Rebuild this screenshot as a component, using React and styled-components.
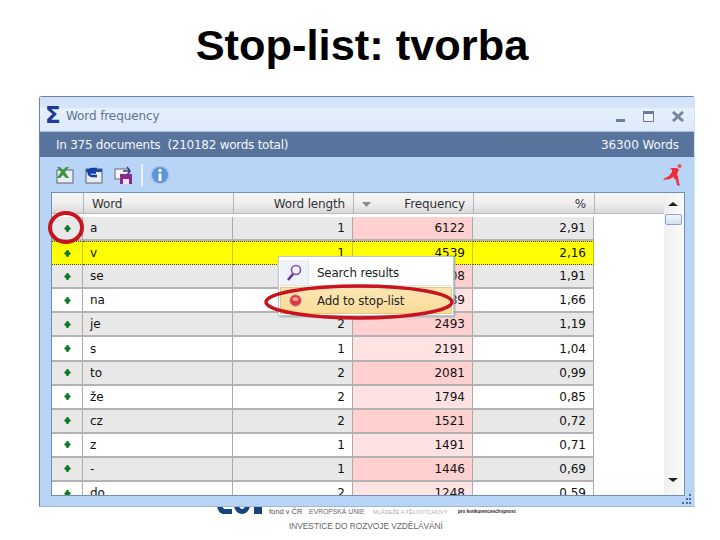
import React from "react";
import styled, { createGlobalStyle } from "styled-components";

const Global = createGlobalStyle`
  html, body { margin: 0; padding: 0; background: #fff; }
  body { width: 720px; height: 540px; overflow: hidden; font-family: "Liberation Sans", Arial, sans-serif; }
`;
const Page = styled.div`
  position: relative; width: 720px; height: 540px; overflow: hidden;
  display: flex; flex-direction: column; align-items: flex-start;
`;
const Heading = styled.h1`
  margin: 0; width: 724px; height: 96px; padding-top: 21px; box-sizing: border-box;
  text-align: center; font: 700 43.4px/48px "Liberation Sans", Arial, sans-serif; color: #000;
`;
const Win = styled.div`
  position: relative; z-index: 2; margin-left: 39px; width: 656px; height: 411px; box-sizing: border-box;
  background: #b8d4f6; border-left: 1px solid #6d83a0; border-top: 1px solid #6d83a0;
  border-radius: 3px 3px 0 0; display: flex; flex-direction: column;
  font-family: "DejaVu Sans", Tahoma, sans-serif; font-size: 11.5px;
  border-bottom: 1px solid #9db7d8; border-right: 1px solid #cfe0f5;
`;
const TitleBar = styled.div`
  height: 35px; display: flex; align-items: center; padding: 0 10px 0 5px; box-sizing: border-box;
  background: linear-gradient(#cfe0f6 0%, #d6e5f8 30%, #e6f0fc 35%, #dce9fa 100%);
  color: #5d7390; border-bottom: 1px solid #a9c3e3;
`;
const Sigma = styled.span`
  font: 700 23px/1 "DejaVu Sans", sans-serif; color: #1b3a9a; width: 21px; padding-top: 3px;
`;
const TitleText = styled.span`flex: 1; font-size: 12px; letter-spacing: -.1px; padding-top: 4px;`;
const WinButtons = styled.div`display: flex; align-items: center; padding-top: 4px;`;
const Strip = styled.div`
  height: 25px; background: #58749c; color: #f2f6fb; display: flex; justify-content: space-between;
  align-items: center; padding: 0 15px 0 16px; font-size: 12px; letter-spacing: -.26px; white-space: pre;
`;
const StripEnd = styled.span`letter-spacing: -.1px;`;
const Toolbar = styled.div`
  height: 35px; display: flex; align-items: center; padding: 0 10px 0 16px; gap: 11px;
`;
const Sep = styled.span`width: 2px; height: 22px; background: #e8f1fc; margin: 0 -4px 0 -2px;`;
const Runner = styled.span`margin-left: auto; height: 24px;`;
const GridWrap = styled.div`
  margin: 0 9px 0 11px; height: 304px; background: #fff; border: 1px solid #6f8fb6;
  display: flex; overflow: hidden; box-sizing: border-box;
`;
const Table = styled.div`flex: 1; min-width: 0;`;
const HeaderRow = styled.div`
  height: 21px; display: grid; grid-template-columns: 31px 150px 120px 120px 121px 71px;
  background: linear-gradient(#f6f6f6, #eeeeee 55%, #d8d8d8); border-bottom: 1px solid #bbb;
  color: #333; box-sizing: border-box;
`;
const HCell = styled.div`
  display: flex; align-items: center; justify-content: ${p => p.$align || "flex-start"};
  padding: 2px 8px 0; border-left: ${p => p.$nosep ? "none" : "1px solid #b4b4b4"}; box-sizing: border-box;
  font-size: 12px; letter-spacing: -.15px;
`;
const Gap = styled.div`height: 3px; background: #fff;`;
const Row = styled.div`
  height: 24.1px; display: grid; grid-template-columns: 31px 150px 120px 120px 121px;
  box-sizing: border-box; position: relative; color: #111; font-size: 12px;
`;
const Cell = styled.div`
  display: flex; align-items: center; box-sizing: border-box;
  justify-content: ${p => p.$right ? "flex-end" : p.$center ? "center" : "flex-start"};
  padding: 0 7px; border-right: 1px solid #aaa; border-bottom: 2px solid #b3b3b3;
  background: ${p => p.$bg};
  ${p => p.$sel ? "border-top: 1px dotted #444; border-bottom: 1px dotted #444; border-right-color:#c8c800;" : ""}
`;
const Scroll = styled.div`
  width: 20px; flex: none; background: linear-gradient(90deg, #f0f0f0, #fafafa); position: relative;
`;
const Thumb = styled.div`
  position: absolute; top: 21px; left: 1px; width: 17px; height: 11px; box-sizing: border-box;
  border: 1px solid #8fa6c4; border-radius: 2px; background: linear-gradient(#f0f5fb, #d3e1f3);
`;
const Arrow = styled.div`
  position: absolute; left: 4px; width: 0; height: 0;
  border-left: 5px solid transparent; border-right: 5px solid transparent;
  ${p => p.$up ? "top: 9px; border-bottom: 4px solid #222;" : "bottom: 13px; border-top: 4px solid #222;"}
`;
const Grip = styled.svg`position: absolute; right: 1px; bottom: 0;`;
const Menu = styled.div`
  position: absolute; z-index: 3; left: 278px; top: 256px; width: 176px; height: 60px; box-sizing: border-box;
  background: #fff; border: 1px solid #b9c6d8; box-shadow: 1px 1px 2px #9aa; padding: 2px 1px;
  font-family: "DejaVu Sans", Tahoma, sans-serif; font-size: 11.8px; color: #222; letter-spacing: -.12px;
`;
const MenuItem = styled.div`
  height: 27px; display: flex; align-items: center; box-sizing: border-box;
  ${p => p.$active ? "background: linear-gradient(#fde6b4, #fbdb98); border: 1px solid #e8c77c; margin-top: 1px;" : "border-bottom: 1px solid #e4e4e4; padding-top: 1px;"}
`;
const MenuIcon = styled.span`
  width: 28px; height: 100%; flex: none; display: flex; align-items: center; justify-content: center;
  margin-right: 8px;
  ${p => p.$active ? "" : "border-right: 1px solid #dbe3ee; background: #eef3f9;"}
`;
const Overlay = styled.svg`position: absolute; z-index: 4; left: 0; top: 0; pointer-events: none;`;
const Footer = styled.div`
  position: relative; z-index: 1; margin-top: -1px; margin-left: 217px; width: 310px; height: 34px;
  color: #555; font-family: "Liberation Sans", Arial, sans-serif;
  display: flex; flex-direction: column;
`;
const FootTop = styled.div`display: flex; align-items: flex-end; height: 10px; font-size: 7.5px; white-space: nowrap;`;
const Logo = styled.svg`align-self: flex-start; flex: none;`;
const FondText = styled.span`margin-left: 6px; width: 40px; line-height: 8px;`;
const UnionText = styled.span`width: 64px; line-height: 8px; color: #667; font-size: 6.8px;`;
const Faint = styled.span`color: #b0b0b0; font-size: 5.6px; width: 85px; line-height: 8px;`;
const Tiny = styled.span`color: #222; font-size: 4.6px; font-weight: 700; line-height: 8px;`;
const FootLine = styled.div`margin: 5px 0 0 72px; font-size: 8.4px; color: #666; white-space: nowrap; letter-spacing: -.05px;`;

const data = [["a",1,6122,"2,91"],["v",1,4539,"2,16"],["se",2,4008,"1,91"],["na",2,3489,"1,66"],["je",2,2493,"1,19"],["s",1,2191,"1,04"],["to",2,2081,"0,99"],["že",2,1794,"0,85"],["cz",2,1521,"0,72"],["z",1,1491,"0,71"],["-",1,1446,"0,69"],["do",2,1248,"0,59"]];

const Dot = () => (
  <svg width="9" height="9" viewBox="0 0 9 9"><path d="M4.5 1 8 4.5 4.5 8 1 4.5Z" fill="#157a25" /><rect x="3.5" y="1" width="2" height="7" fill="#157a25" /></svg>
);

const Grow = ({ i }) => {
  const sel = i === 1;
  const odd = i % 2 === 0;
  const base = sel ? "#ffff00" : odd ? "#e8e8e8" : "#ffffff";
  const pink = sel ? "#ffff00" : odd ? "#ffd0d0" : "#ffe2e2";
  const d = data[i];
  return (
    <Row>
      <Cell $center $sel={sel} $bg={base}><Dot /></Cell>
      <Cell $sel={sel} $bg={base}>{d[0]}</Cell>
      <Cell $right $sel={sel} $bg={base}>{d[1]}</Cell>
      <Cell $right $sel={sel} $bg={pink}>{d[2]}</Cell>
      <Cell $right $sel={sel} $bg={base}>{d[3]}</Cell>
    </Row>
  );
};

export default function App() {
  return (
    <Page>
      <Global />
      <Heading>Stop-list: tvorba</Heading>
      <Win>
        <TitleBar>
          <Sigma>Σ</Sigma>
          <TitleText>Word frequency</TitleText>
          <WinButtons>
            <svg width="27" height="11" viewBox="0 0 27 11"><rect x="0" y="8" width="9" height="3" fill="#6b7f98" /></svg>
            <svg width="29" height="11" viewBox="0 0 29 11"><rect x=".5" y=".5" width="10" height="10" fill="#eef4fb" stroke="#6b7f98" /><rect x="0" y="0" width="11" height="3" fill="#6b7f98" /></svg>
            <svg width="12" height="11" viewBox="0 0 12 11"><path d="M1 1 11 10M11 1 1 10" stroke="#74889f" strokeWidth="3" /></svg>
          </WinButtons>
        </TitleBar>
        <Strip><span>In 375 documents  (210182 words total)</span><StripEnd>36300 Words</StripEnd></Strip>
        <Toolbar>
          <svg width="18" height="18" viewBox="0 0 18 18"><rect x="1" y="4" width="16" height="13" fill="#e9edf2" stroke="#5a6470" /><path d="M1 1l3 0 3 3 3-3 3 0-4 5 4 6-3 0-3-3-3 3-3 0 4-6Z" fill="#3d9440" /></svg>
          <svg width="18" height="18" viewBox="0 0 18 18"><rect x="1" y="3" width="16" height="14" fill="#e9edf2" stroke="#5a6470" /><rect x="1" y="3" width="16" height="3" fill="#234e9c" /><path d="M12 3H7a3.500 3.500 0 0 0 0 7h5M3 6.500h8" stroke="#123fa6" strokeWidth="2.400" fill="none" /></svg>
          <svg width="18" height="18" viewBox="0 0 18 18"><rect x="1" y="3" width="14" height="10" fill="#f2f4f8" stroke="#667" /><rect x="6" y="8" width="12" height="10" fill="#8a2a90" /><rect x="9" y="13" width="6" height="5" fill="#f0e0f0" /><path d="M9 5h7M13 1l3 4-3 4" stroke="#4a3590" strokeWidth="1.500" fill="none" /></svg>
          <Sep />
          <svg width="20" height="20" viewBox="0 0 20 20"><circle cx="10" cy="10" r="8.800" fill="#5b95d8" stroke="#a9c4e6" strokeWidth="1.600" /><circle cx="10" cy="5.500" r="1.700" fill="#fff" /><rect x="8.500" y="8.500" width="3" height="7.500" fill="#fff" /></svg>
          <Runner>
            <svg width="21" height="24" viewBox="0 0 21 24"><circle cx="16.500" cy="3" r="2" fill="#e85058" /><path d="M13 5l3 1-2 5 1 3 1 6 1 3-3-1-1-5-3-3-3 2-7 1 2-2 4-2 3-4 0-3-2 1 1-2Z" fill="#ee2c36" /></svg>
          </Runner>
        </Toolbar>
        <GridWrap>
          <Table>
            <HeaderRow>
              <HCell $nosep />
              <HCell>Word</HCell>
              <HCell $align="flex-end">Word length</HCell>
              <HCell $align="space-between">
                <svg width="9" height="5" viewBox="0 0 9 5"><path d="M0 0h9L4.500 5Z" fill="#8a8a8a" /></svg>
                <span>Frequency</span>
              </HCell>
              <HCell $align="flex-end">%</HCell>
              <HCell />
            </HeaderRow>
            <Gap />
            {data.map((_, i) => <Grow key={i} i={i} />)}
          </Table>
          <Scroll>
            <Arrow $up />
            <Thumb />
            <Arrow />
          </Scroll>
        </GridWrap>
        <Grip width="13" height="13" viewBox="0 0 13 13"><g fill="#4f6f9a"><rect x="9" y="1" width="2" height="2" /><rect x="6" y="5" width="2" height="2" /><rect x="9" y="5" width="2" height="2" /><rect x="2" y="9" width="2" height="2" /><rect x="6" y="9" width="2" height="2" /><rect x="9" y="9" width="2" height="2" /></g></Grip>
      </Win>
      <Footer>
        <FootTop>
          <Logo width="46" height="8" viewBox="0 0 46 8"><g fill="#17447f"><path d="M0 0h5c.5 2 2 3 3 3h7v5H7C3 8 1 5 0 0Z" /><path d="M17 0h5c.5 2 2 3 3 3s3-1 3-3h5c-1 5-4 8-8 8s-7-3-8-8Z" /><rect x="37" y="0" width="8" height="8" /></g></Logo>
          <FondText>fond v ČR</FondText>
          <UnionText>EVROPSKÁ UNIE</UnionText>
          <Faint>MLÁDEŽE A TĚLOVÝCHOVY</Faint>
          <Tiny>pro konkurenceschopnost</Tiny>
        </FootTop>
        <FootLine>INVESTICE DO ROZVOJE VZDĚLÁVÁNÍ</FootLine>
      </Footer>
      <Menu>
        <MenuItem>
          <MenuIcon><svg width="16" height="18" viewBox="0 0 16 18"><circle cx="10" cy="6" r="4.500" fill="#f4f2fa" stroke="#7b4fb0" strokeWidth="1.600" /><path d="M7 10 2 16" stroke="#6a2fa0" strokeWidth="2.600" /></svg></MenuIcon>
          Search results
        </MenuItem>
        <MenuItem $active>
          <MenuIcon $active><svg width="13" height="13" viewBox="0 0 13 13"><circle cx="6.500" cy="6.500" r="5.800" fill="#d83a42" stroke="#c8a0a0" /><ellipse cx="6.500" cy="5" rx="3" ry="2" fill="#f09a9a" /></svg></MenuIcon>
          Add to stop-list
        </MenuItem>
      </Menu>
      <Overlay width="720" height="540">
        <ellipse cx="66" cy="227.500" rx="16" ry="14.500" fill="none" stroke="#c8141e" strokeWidth="4" />
        <ellipse cx="359" cy="302" rx="93" ry="16" fill="none" stroke="#c8141e" strokeWidth="3.500" />
      </Overlay>
    </Page>
  );
}
